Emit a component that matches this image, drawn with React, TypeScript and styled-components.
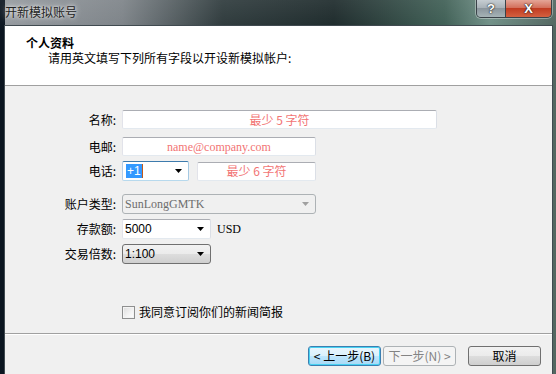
import React from 'react';
import styled, { createGlobalStyle, css } from 'styled-components';

const GlobalStyle = createGlobalStyle`
    html, body {
        margin: 0;
        padding: 0;
        width: 556px;
        height: 374px;
        overflow: hidden;
    }

    body {
        font-family: "Noto Sans CJK SC", "Liberation Sans", sans-serif;
        font-size: 12px;
        color: #000;
    }

    * {
        box-sizing: border-box;
    }
`;

const cjk = `"Noto Sans CJK SC", "Liberation Sans", sans-serif`;
const serif = `"Liberation Serif", "DejaVu Serif", serif`;
const sans = `"Liberation Sans", "Noto Sans CJK SC", sans-serif`;

const Window = styled.div`
    width: 556px;
    height: 374px;
    display: flex;
    flex-direction: column;
    background:
        linear-gradient(180deg, rgba(255, 255, 255, 0.08), rgba(0, 0, 0, 0) 30px),
        linear-gradient(90deg, #0b1520 0px, #0b1520 5px, transparent 5px),
        linear-gradient(90deg, #959a9f 0%, #7d8388 22%, #2e3a3c 40%, #1d2a2b 60%, #3f5f55 80%, #6f8f86 88%, #526660 100%);
    overflow: hidden;
`;

const TitleBar = styled.div`
    height: 25px;
    flex: none;
    display: flex;
    align-items: flex-start;
    justify-content: space-between;
    padding: 0 4px 0 5px;
`;

const TitleText = styled.span`
    margin-top: 3px;
    font-family: ${cjk};
    font-size: 12px;
    line-height: 17px;
    color: #222;
    text-shadow: 0 0 6px rgba(255, 255, 255, 0.9), 0 0 3px rgba(255, 255, 255, 0.7);
`;

const CaptionGroup = styled.div`
    display: flex;
    height: 18px;
    border: 1px solid #3a4248;
    border-top: none;
    border-radius: 0 0 5px 5px;
    overflow: hidden;
    box-shadow: 0 0 0 1px rgba(255, 255, 255, 0.35);
`;

const CaptionButton = styled.div<{ $variant: 'help' | 'close' }>`
    display: flex;
    align-items: center;
    justify-content: center;
    font-family: ${sans};
    font-weight: 700;
    font-size: 13px;
    color: #fff;
    text-shadow: 0 0 2px #222, 0 0 1px #000;
    ${({ $variant }) =>
        $variant === 'help'
            ? css`
                  width: 29px;
                  background: linear-gradient(180deg, #c6cdd2 0%, #a9b2b8 45%, #8b969d 50%, #a6b3b6 100%);
                  border-right: 1px solid #3a4248;
              `
            : css`
                  width: 45px;
                  background: linear-gradient(180deg, #e4a597 0%, #d3705c 45%, #c13c22 50%, #d4603f 100%);
              `}
`;

const Client = styled.div`
    flex: 1;
    margin: 0 3px 0 4px;
    display: flex;
    flex-direction: column;
    border-left: 1px solid #404a50;
    border-top: 1px solid #404a50;
    border-right: 1px solid #404a50;
    background: #f0f0f0;
`;

const Header = styled.div`
    height: 60px;
    flex: none;
    background: #fff;
    border-bottom: 1px solid #a0a0a0;
    padding: 9px 0 0 21px;
    display: flex;
    flex-direction: column;
`;

const HeaderTitle = styled.div`
    font-family: ${cjk};
    font-weight: 700;
    font-size: 12px;
    line-height: 16px;
`;

const HeaderSub = styled.div`
    font-family: ${cjk};
    font-size: 12px;
    line-height: 14px;
    padding-left: 22px;
`;

const Body = styled.div`
    flex: 1;
    display: flex;
    flex-direction: column;
`;

const Form = styled.div`
    padding: 24px 0 0 50px;
    display: flex;
    flex-direction: column;
`;

const Row = styled.div<{ $gap?: number }>`
    display: flex;
    align-items: center;
    gap: 6px;
    margin-top: ${({ $gap }) => $gap || 0}px;
`;

const Label = styled.span`
    width: 61px;
    text-align: right;
    font-family: ${cjk};
    font-size: 12px;
    line-height: 16px;
`;

const TextBox = styled.div<{ $width: number; $serif?: boolean }>`
    width: ${({ $width }) => $width}px;
    height: 19px;
    background: #fff;
    border: 1px solid;
    border-color: #abadb3 #dbdfe6 #e3e9ef #e2e3ea;
    border-radius: 2px;
    display: flex;
    align-items: center;
    justify-content: center;
    color: #f27474;
    font-family: ${({ $serif }) => ($serif ? serif : cjk)};
    font-size: 12px;
    line-height: 16px;
    white-space: pre;
`;

const ComboBox = styled.div<{ $width: number; $kind: 'focus' | 'edit' | 'disabled' | 'list' }>`
    width: ${({ $width }) => $width}px;
    height: 20px;
    display: flex;
    align-items: center;
    padding: 0 6px 0 2px;
    border: 1px solid;
    border-radius: 2px;
    font-family: ${sans};
    font-size: 12px;
    ${({ $kind }) => {
        switch ($kind) {
            case 'focus':
                return css`
                    background: #fff;
                    border-color: #3d7bad #a4c9e3 #b7d9ed #b5cfe7;
                `;
            case 'edit':
                return css`
                    background: #fff;
                    border-color: #abadb3 #dbdfe6 #e3e9ef #e2e3ea;
                `;
            case 'disabled':
                return css`
                    background: #f0f0f0;
                    border-color: #adb2b5;
                    border-radius: 3px;
                    color: #6d6d6d;
                    font-family: ${serif};
                    font-size: 12px;
                `;
            default:
                return css`
                    background: linear-gradient(180deg, #f2f2f2 0%, #ebebeb 50%, #dddddd 51%, #cfcfcf 100%);
                    border-color: #707070;
                    border-radius: 3px;
                `;
        }
    }}
`;

const ComboValue = styled.span`
    flex: 1;
    line-height: 16px;
    white-space: pre;
`;

const Selected = styled.span`
    background: #3399ff;
    color: #fff;
    padding: 0 1px;
    margin-left: 1px;
    line-height: 14px;
    border-right: 1px solid #c35a1a;
`;

const Unit = styled.span`
    font-family: ${serif};
    font-size: 12px;
`;

const CheckRow = styled.label`
    display: flex;
    align-items: center;
    gap: 4px;
    margin: 41px 0 0 67px;
    font-family: ${cjk};
    font-size: 12px;
    line-height: 14px;
`;

const CheckBox = styled.span`
    width: 13px;
    height: 13px;
    border: 1px solid #8e8f8f;
    background: linear-gradient(135deg, #dcdcdc 0%, #f4f4f4 60%, #ffffff 100%);
    box-shadow: inset 0 0 0 1px #f4f4f4;
`;

const Separator = styled.div`
    margin-top: 14px;
    height: 2px;
    border-top: 1px solid #a0a0a0;
    border-bottom: 1px solid #ffffff;
`;

const ButtonBar = styled.div`
    display: flex;
    justify-content: flex-end;
    align-items: center;
    padding: 11px 11px 0 0;
`;

const Button = styled.div<{ $kind?: 'default' | 'disabled'; $space?: number }>`
    width: 73px;
    height: 20px;
    margin-left: ${({ $space }) => $space || 0}px;
    display: flex;
    align-items: center;
    justify-content: center;
    border: 1px solid #707070;
    border-radius: 3px;
    background: linear-gradient(180deg, #f2f2f2 0%, #ebebeb 50%, #dddddd 51%, #cfcfcf 100%);
    font-family: ${cjk};
    font-size: 12px;
    line-height: 16px;
    white-space: pre;
    ${({ $kind }) =>
        $kind === 'default' &&
        css`
            border-color: #3c7fb1;
            background: linear-gradient(180deg, #eaf6fd 0%, #d9f0fc 50%, #bee6fd 51%, #a7d9f5 100%);
            box-shadow: inset 0 0 0 1px #48d2f2;
        `}
    ${({ $kind }) =>
        $kind === 'disabled' &&
        css`
            border-color: #adb2b5;
            background: #f4f4f4;
            color: #838383;
        `}
`;

const Arrow = ({ color = '#000' }: { color?: string }) => (
    <svg width="7" height="4" viewBox="0 0 7 4">
        <path d="M0 0h7L3.5 4z" fill={color} />
    </svg>
);

const App = () => (
    <Window>
        <GlobalStyle />
        <TitleBar>
            <TitleText>开新模拟账号</TitleText>
            <CaptionGroup>
                <CaptionButton $variant="help">?</CaptionButton>
                <CaptionButton $variant="close">X</CaptionButton>
            </CaptionGroup>
        </TitleBar>
        <Client>
            <Header>
                <HeaderTitle>个人资料</HeaderTitle>
                <HeaderSub>请用英文填写下列所有字段以开设新模拟帐户:</HeaderSub>
            </Header>
            <Body>
                <Form>
                    <Row>
                        <Label>名称:</Label>
                        <TextBox $width={315}>最少 5 字符</TextBox>
                    </Row>
                    <Row $gap={8}>
                        <Label>电邮:</Label>
                        <TextBox $width={194} $serif>
                            name@company.com
                        </TextBox>
                    </Row>
                    <Row $gap={5}>
                        <Label>电话:</Label>
                        <ComboBox $width={67} $kind="focus">
                            <ComboValue>
                                <Selected>+1</Selected>
                            </ComboValue>
                            <Arrow />
                        </ComboBox>
                        <TextBox $width={119} style={{ marginLeft: 2 }}>
                            最少 6 字符
                        </TextBox>
                    </Row>
                    <Row $gap={13}>
                        <Label>账户类型:</Label>
                        <ComboBox $width={194} $kind="disabled">
                            <ComboValue>SunLongGMTK</ComboValue>
                            <Arrow color="#a0a0a0" />
                        </ComboBox>
                    </Row>
                    <Row $gap={5}>
                        <Label>存款额:</Label>
                        <ComboBox $width={89} $kind="edit">
                            <ComboValue>5000</ComboValue>
                            <Arrow />
                        </ComboBox>
                        <Unit>USD</Unit>
                    </Row>
                    <Row $gap={5}>
                        <Label>交易倍数:</Label>
                        <ComboBox $width={89} $kind="list">
                            <ComboValue>1:100</ComboValue>
                            <Arrow />
                        </ComboBox>
                    </Row>
                    <CheckRow>
                        <CheckBox />
                        我同意订阅你们的新闻简报
                    </CheckRow>
                </Form>
                <Separator />
                <ButtonBar>
                    <Button $kind="default">{'< 上一步(B)'}</Button>
                    <Button $kind="disabled" $space={2}>
                        {'下一步(N) >'}
                    </Button>
                    <Button $space={12}>取消</Button>
                </ButtonBar>
            </Body>
        </Client>
    </Window>
);

export default App;
